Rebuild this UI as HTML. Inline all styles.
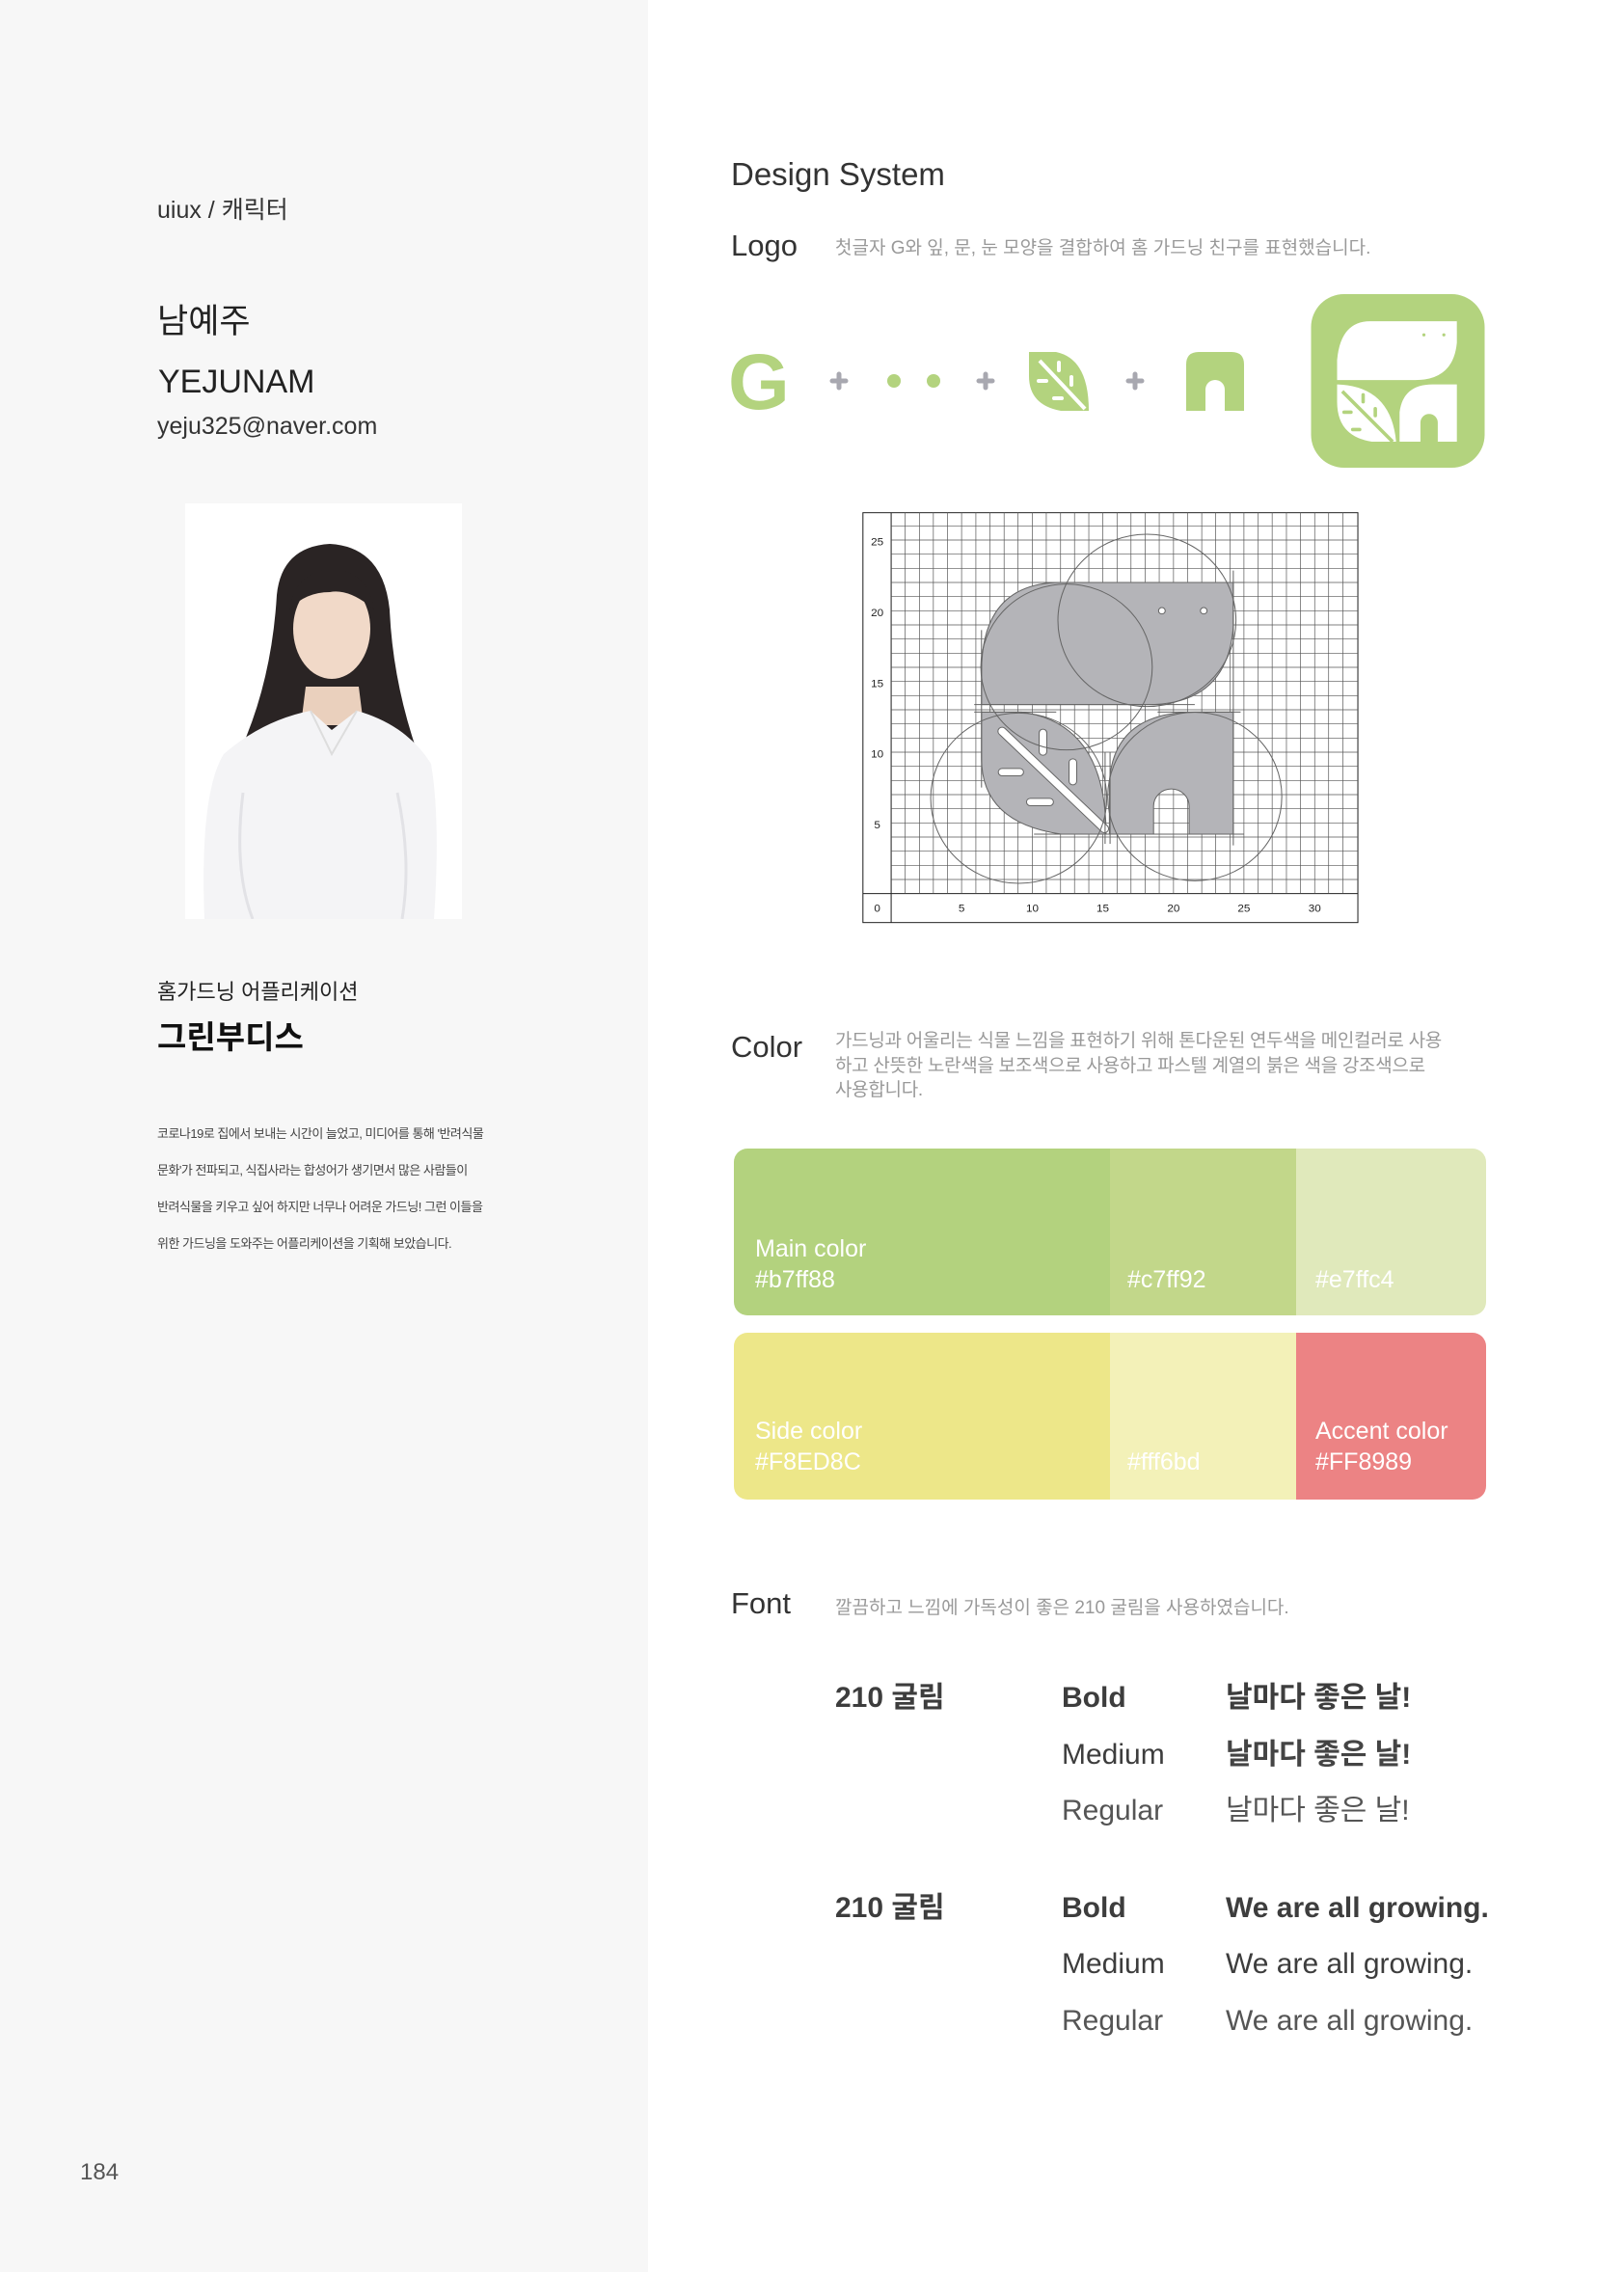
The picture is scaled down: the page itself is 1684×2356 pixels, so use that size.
<!DOCTYPE html>
<html><head><meta charset="utf-8">
<style>
*{margin:0;padding:0;box-sizing:border-box}
body{width:1684px;height:2356px;position:relative;background:#fff;font-family:"Liberation Sans","Noto Sans CJK KR",sans-serif;color:#333;overflow:hidden}
.t{position:absolute;white-space:nowrap;line-height:1}
.left{position:absolute;left:0;top:0;width:672px;height:2356px;background:#f7f7f7}
.sw{position:absolute;color:#fff;font-size:25px;line-height:32px}
.ft{position:absolute;font-size:30px;line-height:1;white-space:nowrap;color:#3d3d3d}
</style></head><body>
<div class="left"></div>
<div class="t" style="left:163px;top:206px;font-size:25px;color:#333">uiux / 캐릭터</div>
<div class="t" style="left:163px;top:316px;font-size:35px;color:#222">남예주</div>
<div class="t" style="left:164px;top:379px;font-size:34px;color:#222">YEJUNAM</div>
<div class="t" style="left:163px;top:430px;font-size:25px;color:#333">yeju325@naver.com</div>

<svg style="position:absolute;left:192px;top:522px" width="287" height="431" viewBox="0 0 287 431">
<rect width="287" height="431" fill="#fff"/>
<path d="M95 95 Q100 45 150 42 Q205 45 212 110 Q215 180 238 250 L60 250 Q90 180 95 95Z" fill="#2a2424"/>
<ellipse cx="152" cy="130" rx="40" ry="52" fill="#f1d9c8"/>
<path d="M108 110 Q115 70 152 68 Q190 70 196 110 Q170 88 150 92 Q125 92 108 110Z" fill="#2a2424"/>
<path d="M125 190 L180 190 L185 230 L120 230Z" fill="#ead0bd"/>
<path d="M20 431 Q15 300 40 260 Q80 225 130 215 L152 235 L178 215 Q230 230 255 270 Q265 330 258 431Z" fill="#f4f4f6"/>
<path d="M130 215 L152 260 L178 215" fill="none" stroke="#ddd" stroke-width="2"/>
<path d="M60 300 Q50 380 70 431 M220 300 Q235 370 225 431" fill="none" stroke="#e2e2e6" stroke-width="3"/>
</svg>

<div class="t" style="left:163px;top:1018px;font-size:22px;color:#222">홈가드닝 어플리케이션</div>
<div class="t" style="left:163px;top:1059px;font-size:33px;font-weight:bold;color:#111">그린부디스</div>
<div style="position:absolute;left:163px;top:1157px;font-size:13px;line-height:38px;color:#444;letter-spacing:-0.5px;white-space:nowrap">코로나19로 집에서 보내는 시간이 늘었고, 미디어를 통해 '반려식물<br>문화'가 전파되고, 식집사라는 합성어가 생기면서 많은 사람들이<br>반려식물을 키우고 싶어 하지만 너무나 어려운 가드닝! 그런 이들을<br>위한 가드닝을 도와주는 어플리케이션을 기획해 보았습니다.</div>
<div class="t" style="left:83px;top:2241px;font-size:24px;color:#555">184</div>

<div class="t" style="left:758px;top:164px;font-size:33px;color:#333">Design System</div>
<div class="t" style="left:758px;top:239px;font-size:31px;color:#333">Logo</div>
<div class="t" style="left:866px;top:248px;font-size:19px;color:#999">첫글자 G와 잎, 문, 눈 모양을 결합하여 홈 가드닝 친구를 표현했습니다.</div>

<div class="t" style="left:755px;top:356px;font-size:82px;font-weight:bold;color:#b3d37e;font-family:'Liberation Sans',sans-serif">G</div>
<svg style="position:absolute;left:850px;top:365px" width="450" height="62" viewBox="850 365 450 62">
<g stroke="#a8a8b0" stroke-width="5" stroke-linecap="round">
<path d="M863 395h14M870 388v14M1015 395h14M1022 388v14M1170 395h14M1177 388v14"/>
</g>
<circle cx="927" cy="395" r="7" fill="#b3d37e"/><circle cx="968" cy="395" r="7" fill="#b3d37e"/>
<path d="M1067 365 L1095 365 Q1129 372 1129 426 L1100 426 Q1067 420 1067 390Z" fill="#b3d37e"/>
<path d="M1078 374 L1125 424" stroke="#fff" stroke-width="4"/>
<g stroke="#fff" stroke-width="4" stroke-linecap="round"><path d="M1077 395h8M1093 413h8M1098 376v8M1111 391v8"/></g>
<path d="M1230 426 L1230 378 Q1230 365 1243 365 L1277 365 Q1290 365 1290 378 L1290 426 L1270 426 L1270 404 A10 10 0 0 0 1250 404 L1250 426Z" fill="#b3d37e"/>
</svg>
<svg style="position:absolute;left:1358px;top:305px" width="183" height="180" viewBox="0 0 100 100">
<rect width="100" height="100" rx="19" fill="#b3d37e"/>
<path d="M34 15.6 L84 15.6 L84 28 Q82 49.5 60 49.5 L15 49.5 L15 38 Q17 15.6 34 15.6Z" fill="#fff"/>
<circle cx="65" cy="23.5" r="0.9" fill="#b3d37e"/><circle cx="76.5" cy="23.5" r="0.9" fill="#b3d37e"/>
<path d="M15 52 Q46 53 49 85 L35 85 Q15 82 15 62Z" fill="#fff"/>
<path d="M18 56 L47 85" stroke="#b3d37e" stroke-width="2"/>
<g stroke="#b3d37e" stroke-width="2" stroke-linecap="round"><path d="M19 68h4M24 78h4M30 58v4M37 66v4"/></g>
<path d="M51 85 L51 68 Q53 52 70 52 L84 52 L84 85 L73 85 L73 74 A5 5 0 0 0 63 74 L63 85Z" fill="#fff"/>
</svg>

<svg style="position:absolute;left:880px;top:510px" width="558" height="460" viewBox="0 0 1620 1380" preserveAspectRatio="none">
<rect x="43" y="65" width="1490" height="1275" fill="#fff" stroke="#222" stroke-width="3"/>
<path d="M128 65V1340M43 1250H1533" stroke="#222" stroke-width="3"/>
<g stroke="#555" stroke-width="2">
<path d="M170 65V1250M213 65V1250M255 65V1250M298 65V1250M340 65V1250M383 65V1250M425 65V1250M468 65V1250M510 65V1250M553 65V1250M595 65V1250M638 65V1250M680 65V1250M723 65V1250M765 65V1250M808 65V1250M850 65V1250M893 65V1250M935 65V1250M978 65V1250M1020 65V1250M1063 65V1250M1105 65V1250M1148 65V1250M1190 65V1250M1233 65V1250M1275 65V1250M1318 65V1250M1360 65V1250M1403 65V1250M1445 65V1250M1488 65V1250"/>
<path d="M128 1206H1533M128 1162H1533M128 1118H1533M128 1074H1533M128 1030H1533M128 986H1533M128 942H1533M128 898H1533M128 854H1533M128 810H1533M128 766H1533M128 722H1533M128 678H1533M128 634H1533M128 590H1533M128 546H1533M128 502H1533M128 458H1533M128 414H1533M128 370H1533M128 326H1533M128 282H1533M128 238H1533M128 194H1533M128 150H1533M128 106H1533"/>
</g>
<g fill="#b4b4b8" stroke="#666" stroke-width="3">
<path d="M640 282 L1158 282 L1158 420 Q1140 662 900 662 L400 662 L400 560 Q400 282 640 282Z"/>
<path d="M400 685 L520 685 Q775 720 775 1065 L640 1065 Q400 1030 400 830Z"/>
<path fill-rule="evenodd" d="M785 1065 L785 900 Q800 685 1042 685 L1158 685 L1158 1065Z M918 1065 L918 978 A53.5 53.5 0 0 1 1025 978 L1025 1065Z"/>
</g>
<path d="M462 745 L770 1048" stroke="#666" stroke-width="28" stroke-linecap="round"/>
<path d="M462 745 L770 1048" stroke="#fff" stroke-width="22" stroke-linecap="round"/>
<g stroke="#666" stroke-width="26" stroke-linecap="round"><path d="M462 872H515M585 750V808M675 842V900M547 965H605"/></g>
<g stroke="#fff" stroke-width="20" stroke-linecap="round"><path d="M462 872H515M585 750V808M675 842V900M547 965H605"/></g>
<g fill="none" stroke="#666" stroke-width="3">
<circle cx="898" cy="400" r="268"/>
<circle cx="656" cy="545" r="258"/>
<circle cx="512" cy="953" r="265"/>
<circle cx="1042" cy="948" r="262"/>
<path d="M510 282H1188M378 662H1042M378 685H625M930 685H1180M558 1065H1190M400 430V920M1158 245V1100M772 810V1095M787 810V1095"/>
</g>
<circle cx="943" cy="370" r="10" fill="#fff" stroke="#666" stroke-width="3"/>
<circle cx="1069" cy="370" r="10" fill="#fff" stroke="#666" stroke-width="3"/>
<g font-family="Liberation Sans,sans-serif" font-size="34" fill="#222" text-anchor="middle">
<text x="86" y="167">25</text><text x="86" y="387">20</text><text x="86" y="607">15</text><text x="86" y="827">10</text><text x="86" y="1047">5</text>
<text x="86" y="1307">0</text><text x="340" y="1307">5</text><text x="553" y="1307">10</text><text x="765" y="1307">15</text><text x="978" y="1307">20</text><text x="1190" y="1307">25</text><text x="1403" y="1307">30</text>
</g>
</svg>

<div class="t" style="left:758px;top:1070px;font-size:31px;color:#333">Color</div>
<div style="position:absolute;left:866px;top:1067px;font-size:19px;line-height:25.5px;color:#999;white-space:nowrap;letter-spacing:-0.3px">가드닝과 어울리는 식물 느낌을 표현하기 위해 톤다운된 연두색을 메인컬러로 사용<br>하고 산뜻한 노란색을 보조색으로 사용하고 파스텔 계열의 붉은 색을 강조색으로<br>사용합니다.</div>

<div style="position:absolute;left:761px;top:1191px;width:780px;height:173px;border-radius:14px;overflow:hidden;display:flex">
<div style="width:390px;background:#b3d27e"></div><div style="width:193px;background:#c2d78a"></div><div style="flex:1;background:#e0e9bb"></div></div>
<div class="sw" style="left:783px;top:1279px">Main color<br>#b7ff88</div>
<div class="sw" style="left:1169px;top:1311px">#c7ff92</div>
<div class="sw" style="left:1364px;top:1311px">#e7ffc4</div>
<div style="position:absolute;left:761px;top:1382px;width:780px;height:173px;border-radius:14px;overflow:hidden;display:flex">
<div style="width:390px;background:#ede789"></div><div style="width:193px;background:#f3f1b8"></div><div style="flex:1;background:#ec8384"></div></div>
<div class="sw" style="left:783px;top:1468px">Side color<br>#F8ED8C</div>
<div class="sw" style="left:1169px;top:1500px">#fff6bd</div>
<div class="sw" style="left:1364px;top:1468px">Accent color<br>#FF8989</div>

<div class="t" style="left:758px;top:1647px;font-size:31px;color:#333">Font</div>
<div class="t" style="left:866px;top:1658px;font-size:19px;color:#999">깔끔하고 느낌에 가독성이 좋은 210 굴림을 사용하였습니다.</div>

<div class="ft" style="left:866px;top:1746px;font-weight:bold">210 굴림</div>
<div class="ft" style="left:1101px;top:1746px;font-weight:bold">Bold</div>
<div class="ft" style="left:1271px;top:1746px;font-weight:bold">날마다 좋은 날!</div>
<div class="ft" style="left:1101px;top:1805px">Medium</div>
<div class="ft" style="left:1271px;top:1805px;font-weight:bold;color:#444">날마다 좋은 날!</div>
<div class="ft" style="left:1101px;top:1863px;color:#555">Regular</div>
<div class="ft" style="left:1271px;top:1863px;color:#555">날마다 좋은 날!</div>

<div class="ft" style="left:866px;top:1964px;font-weight:bold">210 굴림</div>
<div class="ft" style="left:1101px;top:1964px;font-weight:bold">Bold</div>
<div class="ft" style="left:1271px;top:1964px;font-weight:bold">We are all growing.</div>
<div class="ft" style="left:1101px;top:2022px">Medium</div>
<div class="ft" style="left:1271px;top:2022px">We are all growing.</div>
<div class="ft" style="left:1101px;top:2081px;color:#555">Regular</div>
<div class="ft" style="left:1271px;top:2081px;color:#555">We are all growing.</div>
</body></html>
